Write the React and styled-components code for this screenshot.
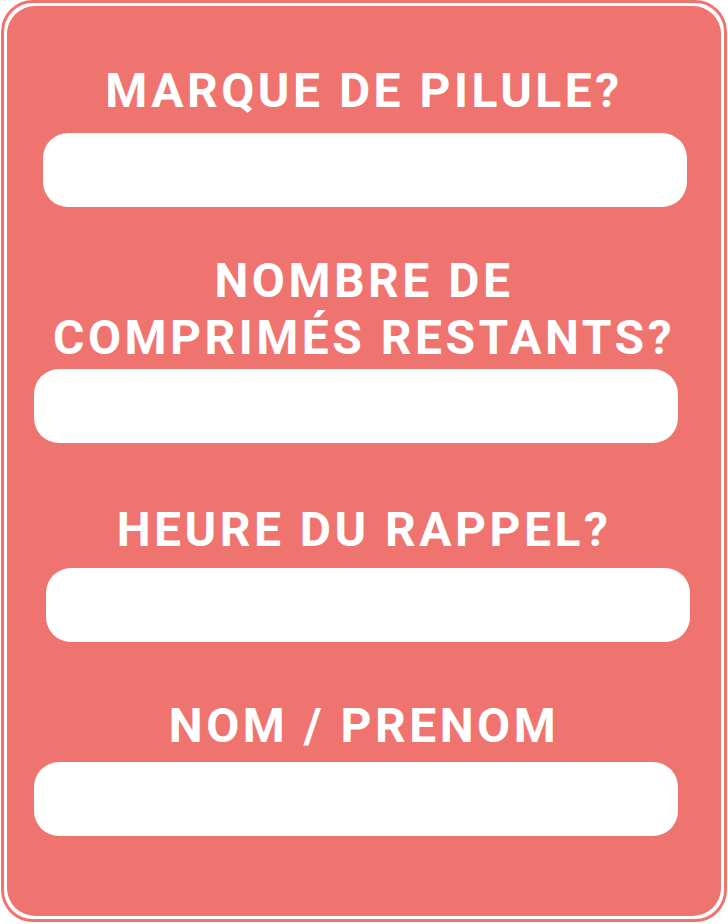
import React from "react";
import styled, { createGlobalStyle } from "styled-components";

const Global = createGlobalStyle`
  html, body { margin: 0; padding: 0; background: #ffffff; }
  body { font-family: Roboto, "Liberation Sans", sans-serif; }
`;

const SALMON = "#ef7470";

const Frame = styled.div`
  box-sizing: border-box;
  width: 726px;
  height: 922px;
  margin-left: 1px;
  border: 3px solid ${SALMON};
  border-radius: 32px;
  padding: 3px;
  background: #ffffff;
`;

const Panel = styled.form`
  box-sizing: border-box;
  height: 100%;
  background: ${SALMON};
  border-radius: 28px;
  padding-top: 56px;
  display: flex;
  flex-direction: column;
`;

const Label = styled.label`
  display: block;
  margin: ${(p) => p.$top || 0}px 0 0;
  color: #ffffff;
  font-family: Roboto, "Liberation Sans", sans-serif;
  font-weight: 700;
  font-size: 48px;
  line-height: 57px;
  letter-spacing: 3.5px;
  text-align: center;
  text-transform: uppercase;
`;

const Field = styled.input`
  box-sizing: border-box;
  display: block;
  width: 644px;
  height: 74px;
  margin: ${(p) => p.$gap}px 0 0 ${(p) => p.$left}px;
  border: none;
  border-radius: 25px;
  background: #ffffff;
  outline: none;
  padding: 0 24px;
  font-family: Roboto, "Liberation Sans", sans-serif;
  font-size: 24px;
`;

export default function App() {
  return (
    <>
      <Global />
      <Frame>
        <Panel onSubmit={(e) => e.preventDefault()}>
          <Label htmlFor="marque">MARQUE DE PILULE?</Label>
          <Field id="marque" $gap={14} $left={36} />
          <Label htmlFor="nombre" $top={45}>
            NOMBRE DE
            <br />
            COMPRIMÉS RESTANTS?
          </Label>
          <Field id="nombre" $gap={3} $left={27} />
          <Label htmlFor="heure" $top={58}>HEURE DU RAPPEL?</Label>
          <Field id="heure" $gap={10} $left={39} />
          <Label htmlFor="nom" $top={55}>NOM / PRENOM</Label>
          <Field id="nom" $gap={8} $left={27} />
        </Panel>
      </Frame>
    </>
  );
}
